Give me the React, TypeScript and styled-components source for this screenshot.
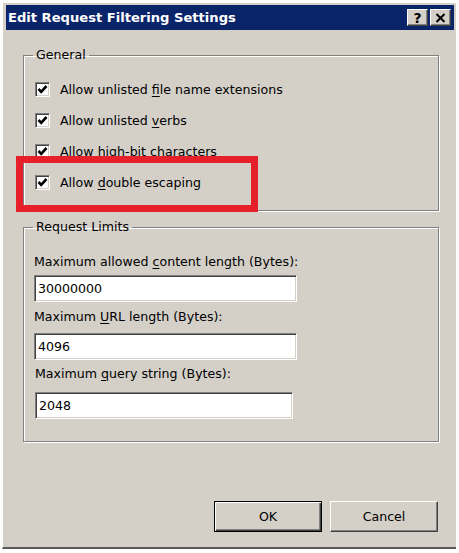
import React from "react";
import styled, { createGlobalStyle } from "styled-components";

const Global = createGlobalStyle`
  html, body { margin: 0; padding: 0; background: #ffffff; }
  body { font-family: "DejaVu Sans", Tahoma, sans-serif; color: #000; }
`;

const Window = styled.div`
  position: relative;
  box-sizing: border-box;
  margin: 2px 0 0 2px;
  width: 454px;
  height: 547px;
  background: #d4d0c8;
  border-left: 1px solid #ffffff;
  border-top: 1px solid #ffffff;
  border-bottom: 2px solid #5a5a5a;
  padding: 2px 2px 0 3px;
  display: flex;
  flex-direction: column;
`;

const TitleBar = styled.div`
  height: 25px;
  background: #0a246a;
  display: flex;
  align-items: center;
  padding: 0 3px 0 2px;
  gap: 2px;
`;

const Title = styled.div`
  flex: 1;
  color: #ffffff;
  font-weight: bold;
  font-size: 13.1px;
  white-space: nowrap;
`;

const TitleButton = styled.div`
  box-sizing: border-box;
  width: 21px;
  height: 17px;
  background: #d4d0c8;
  border: 1px solid;
  border-color: #ffffff #404040 #404040 #ffffff;
  box-shadow: inset -1px -1px 0 #808080;
  display: flex;
  align-items: center;
  justify-content: center;
  font-weight: bold;
  font-size: 14px;
  color: #000;
`;

const Content = styled.div`
  flex: 1;
  display: flex;
  flex-direction: column;
  padding: 17px 15px 0 17px;
`;

const Group = styled.fieldset<{ $mt?: number; $pt: number; $pb: number }>`
  margin: ${(p) => p.$mt ?? 0}px 0 0 0;
  padding: ${(p) => p.$pt}px 10px ${(p) => p.$pb}px 10px;
  border: 1px solid #808080;
  box-shadow: inset 1px 1px 0 #ffffff, 1px 1px 0 #ffffff;
  min-width: 0;
  display: flex;
  flex-direction: column;
`;

const Legend = styled.legend`
  margin-left: -1px;
  padding: 0 3px;
  font-size: 12.6px;
  line-height: 16px;
`;

const CheckRow = styled.label`
  height: 31px;
  display: flex;
  align-items: center;
  gap: 10px;
  font-size: 12.6px;
  white-space: nowrap;
`;

const Box = styled.span`
  box-sizing: border-box;
  width: 15px;
  height: 15px;
  margin-left: 1px;
  background: #ffffff;
  border: 1px solid;
  border-color: #808080 #ffffff #ffffff #808080;
  box-shadow: inset 1px 1px 0 #404040, inset -1px -1px 0 #d4d0c8;
  display: flex;
  align-items: center;
  justify-content: center;
  flex: none;
`;

const Key = styled.span`
  text-decoration: underline;
  text-underline-offset: 2px;
`;

const Field = styled.div<{ $mt?: number; $gap: number }>`
  display: flex;
  flex-direction: column;
  gap: ${(p) => p.$gap}px;
  margin-top: ${(p) => p.$mt ?? 0}px;
`;

const FieldLabel = styled.div<{ $indent?: number }>`
  font-size: 12.6px;
  line-height: 18px;
  white-space: nowrap;
  padding-left: ${(p) => p.$indent ?? 0}px;
`;

const TextInput = styled.div<{ $w: number; $indent?: number }>`
  box-sizing: border-box;
  width: ${(p) => p.$w}px;
  height: 27px;
  margin-left: ${(p) => p.$indent ?? 0}px;
  background: #ffffff;
  border: 1px solid;
  border-color: #808080 #ffffff #ffffff #808080;
  box-shadow: inset 1px 1px 0 #404040, inset -1px -1px 0 #d4d0c8;
  display: flex;
  align-items: center;
  padding-left: 3px;
  font-size: 12.6px;
`;

const ButtonRow = styled.div`
  margin-top: auto;
  margin-bottom: 15px;
  display: flex;
  justify-content: flex-end;
  gap: 8px;
  padding-right: 1px;
`;

const Button = styled.div<{ $default?: boolean }>`
  box-sizing: border-box;
  width: 108px;
  height: 31px;
  background: #d4d0c8;
  border: 1px solid;
  border-color: ${(p) => (p.$default ? "#000000" : "#ffffff #404040 #404040 #ffffff")};
  box-shadow: ${(p) =>
    p.$default
      ? "inset 1px 1px 0 #ffffff, inset -1px -1px 0 #404040, inset -2px -2px 0 #808080"
      : "inset -1px -1px 0 #808080"};
  display: flex;
  align-items: center;
  justify-content: center;
  font-size: 12.6px;
`;

const Highlight = styled.div`
  position: absolute;
  left: 13px;
  top: 153px;
  width: 242px;
  height: 56px;
  box-sizing: border-box;
  border: 7px solid #e5202a;
  pointer-events: none;
`;

const Check = () => (
  <svg width="11" height="11" viewBox="0 0 11 11">
    <path d="M1.5 5 L4.2 7.8 L9.5 2" fill="none" stroke="#000" strokeWidth="2.6" />
  </svg>
);

const CloseGlyph = () => (
  <svg width="11" height="10" viewBox="0 0 11 10">
    <path d="M1.5 1 L9.5 9 M9.5 1 L1.5 9" fill="none" stroke="#000" strokeWidth="2" />
  </svg>
);

const Checkbox = ({ children }: { children: React.ReactNode }) => (
  <CheckRow>
    <Box>
      <Check />
    </Box>
    <span>{children}</span>
  </CheckRow>
);

export default function App() {
  return (
    <>
      <Global />
      <Window>
        <TitleBar>
          <Title>Edit Request Filtering Settings</Title>
          <TitleButton>?</TitleButton>
          <TitleButton>
            <CloseGlyph />
          </TitleButton>
        </TitleBar>
        <Content>
          <Group $pt={11} $pb={12}>
            <Legend>General</Legend>
            <Checkbox>
              Allow unlisted <Key>f</Key>ile name extensions
            </Checkbox>
            <Checkbox>
              Allow unlisted <Key>v</Key>erbs
            </Checkbox>
            <Checkbox>
              Allow <Key>h</Key>igh-bit characters
            </Checkbox>
            <Checkbox>
              Allow <Key>d</Key>ouble escaping
            </Checkbox>
          </Group>
          <Group $mt={8} $pt={18} $pb={22}>
            <Legend>Request Limits</Legend>
            <Field $gap={4}>
              <FieldLabel>
                Maximum allowed <Key>c</Key>ontent length (Bytes):
              </FieldLabel>
              <TextInput $w={263}>30000000</TextInput>
            </Field>
            <Field $gap={7} $mt={6}>
              <FieldLabel>
                Maximum <Key>U</Key>RL length (Bytes):
              </FieldLabel>
              <TextInput $w={263}>4096</TextInput>
            </Field>
            <Field $gap={9} $mt={5}>
              <FieldLabel $indent={1}>
                Maximum <Key>q</Key>uery string (Bytes):
              </FieldLabel>
              <TextInput $w={258} $indent={1}>2048</TextInput>
            </Field>
          </Group>
          <ButtonRow>
            <Button $default>OK</Button>
            <Button>Cancel</Button>
          </ButtonRow>
        </Content>
        <Highlight />
      </Window>
    </>
  );
}
